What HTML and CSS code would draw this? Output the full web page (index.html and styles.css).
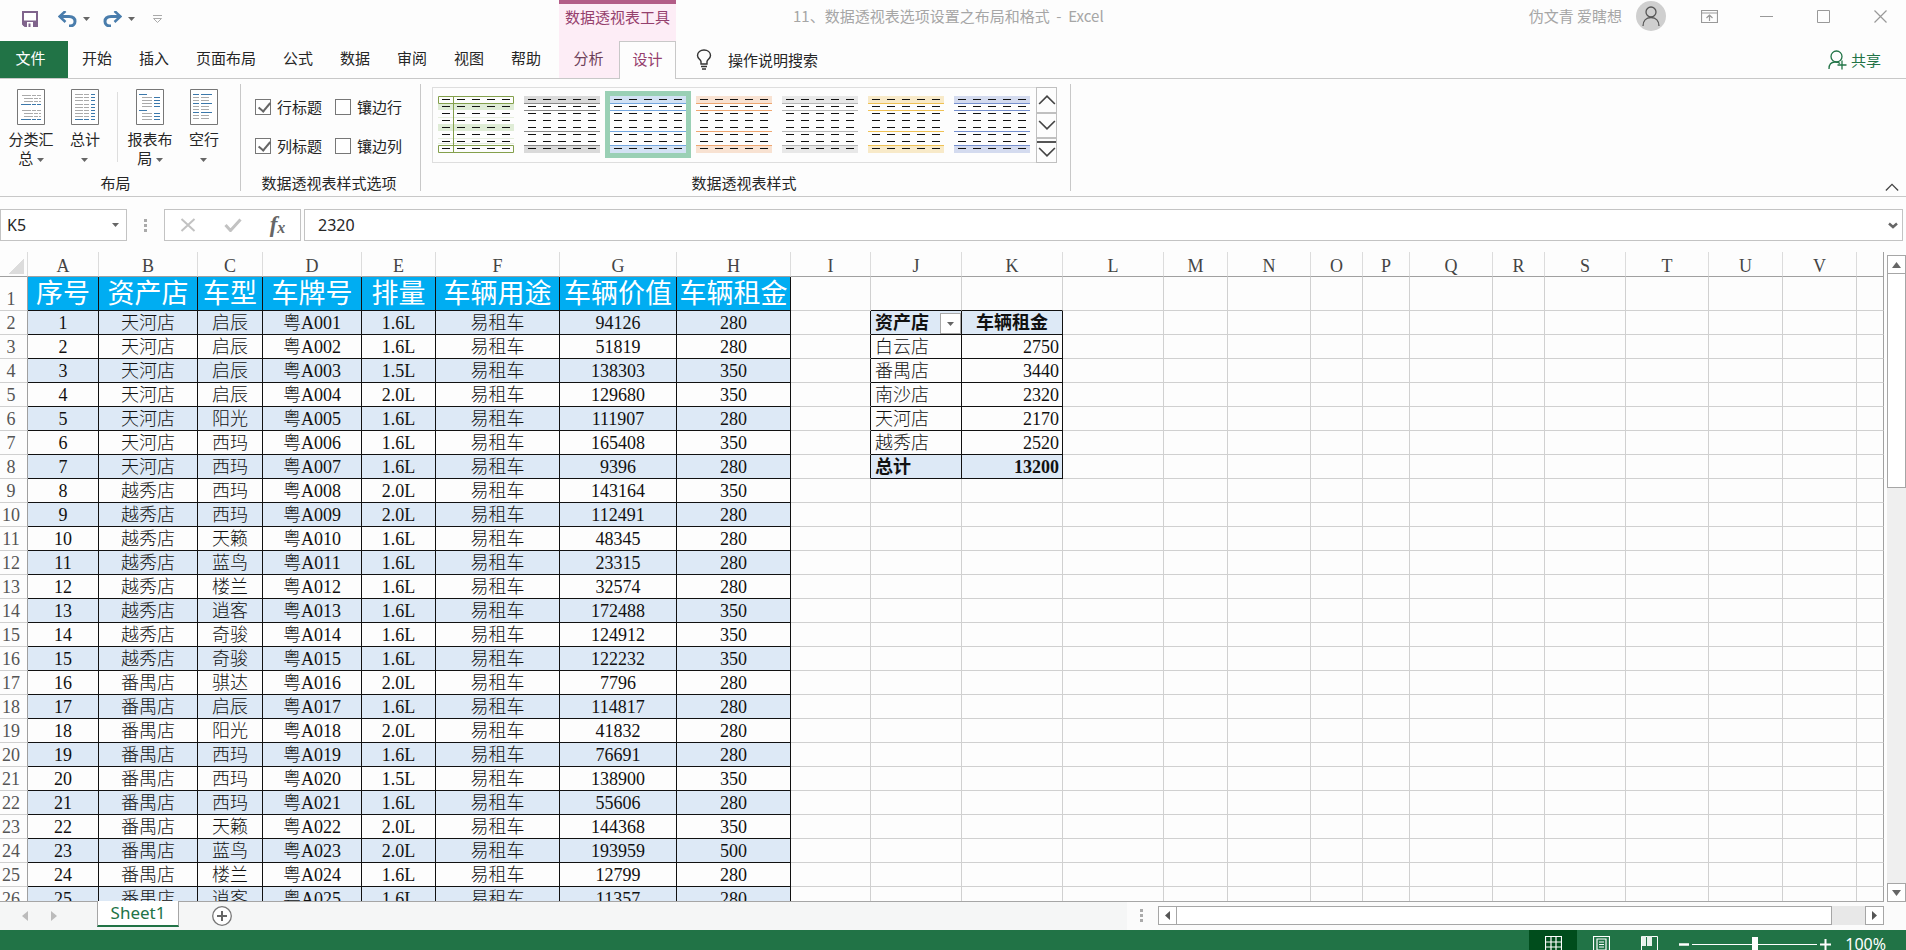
FILE: index.html
```html
<!DOCTYPE html>
<html lang="zh-CN">
<head>
    <meta charset="UTF-8">
    <meta name="viewport" content="width=device-width, initial-scale=1.0">
    <title>11、数据透视表选项设置之布局和格式 - Excel</title>
    <link rel="stylesheet" href="styles.css">
</head>
<body>
    <!-- Shared symbols -->
    <svg class="symbols" aria-hidden="true">
        <symbol id="caret" viewBox="0 0 7 4"><path d="M0 0h7L3.500 4z" fill="currentColor"/></symbol>
        <symbol id="chevron-up" viewBox="0 0 16 9"><path d="M1 8.500L8 1.500l7 7" fill="none" stroke="currentColor" stroke-width="1.500"/></symbol>
        <symbol id="chevron-down" viewBox="0 0 16 9"><path d="M1 .5l7 7 7-7" fill="none" stroke="currentColor" stroke-width="1.500"/></symbol>
        <symbol id="dashes" viewBox="0 0 76 57">
            <path d="M4 3.500h70M4 10.500h70M4 17.500h70M4 24.500h70M4 31.500h70M4 38.500h70M4 45.500h70M4 52.500h70" stroke="#111" stroke-dasharray="8 7"/>
        </symbol>
        <symbol id="style-banded" viewBox="0 0 76 57">
            <path d="M0 0h76v7H0zM0 49h76v8H0z" fill="currentColor" opacity=".3"/>
            <path d="M0 7.500h76M0 14.500h76M0 35.500h76M0 49.500h76" stroke="currentColor"/>
            <use href="#dashes" width="76" height="57"/>
        </symbol>
        <symbol id="style-outline" viewBox="0 0 76 57">
            <path d="M0 8h76v6H0zM0 28h76v7H0z" fill="#dfecd6"/>
            <path d="M0 21.500h76M0 42.500h76M0 47.500h76" stroke="#e6eede"/>
            <path d="M.5.5h75v7H.5zM.5 49.500h75v7H.5zM15.500 0v57" fill="none" stroke="#84a04c"/>
            <use href="#dashes" width="76" height="57"/>
        </symbol>
    </svg>

    <div class="app">
        <header class="top">
            <div class="top-left">
                <div class="quick-access">
                    <button class="qat save" aria-label="保存">
                        <svg width="16" height="16" viewBox="0 0 16 16"><path d="M1 1h14v14H3l-2-2z" fill="#fff" stroke="#80648c" stroke-width="2"/><path d="M1 9.500h14V15H1z" fill="#80648c"/><path d="M5 11h6v5H5z" fill="#fff"/><path d="M6.500 12.500h2V16h-2z" fill="#80648c"/></svg>
                    </button>
                    <button class="qat" aria-label="撤消">
                        <svg width="19" height="16" viewBox="0 0 19 16"><path d="M2 5.500h9c4 0 6 2 6 5 0 2.500-2 4.500-5 4.500h-1" fill="none" stroke="#4a7dac" stroke-width="3"/><path d="M7.500 0L1.500 5.500l6 5.500" fill="none" stroke="#4a7dac" stroke-width="2.500"/></svg>
                    </button>
                    <svg class="caret undo-caret" width="7" height="4"><use href="#caret"/></svg>
                    <button class="qat" aria-label="恢复">
                        <svg width="19" height="16" viewBox="0 0 19 16"><path d="M17 5.500H8c-4 0-6 2-6 5C2 13 4 15 7 15h1" fill="none" stroke="#4a7dac" stroke-width="3"/><path d="M11.500 0l6 5.500-6 5.500" fill="none" stroke="#4a7dac" stroke-width="2.500"/></svg>
                    </button>
                    <svg class="caret redo-caret" width="7" height="4"><use href="#caret"/></svg>
                    <button class="qat" aria-label="自定义快速访问工具栏">
                        <svg width="11" height="9" viewBox="0 0 11 9"><path d="M1 .5h9M1.500 3.500h8l-4 4z" fill="none" stroke="#aaa"/></svg>
                    </button>
                </div>
                <nav class="tabs">
                    <button class="tab tab-file">文件</button>
                    <button class="tab">开始</button>
                    <button class="tab">插入</button>
                    <button class="tab">页面布局</button>
                    <button class="tab">公式</button>
                    <button class="tab">数据</button>
                    <button class="tab">审阅</button>
                    <button class="tab">视图</button>
                    <button class="tab">帮助</button>
                </nav>
            </div>

            <div class="context-tools">
                <div class="context-title">数据透视表工具</div>
                <nav class="tabs">
                    <button class="tab">分析</button>
                    <button class="tab tab-active">设计</button>
                </nav>
            </div>

            <div class="top-right">
                <div class="title-row">
                    <span class="doc-title">11、数据透视表选项设置之布局和格式&nbsp; -&nbsp; Excel</span>
                    <span class="user-name">伪文青 爱瞎想</span>
                    <span class="avatar">
                        <svg width="18" height="20" viewBox="0 0 18 20"><g fill="none" stroke="#555" stroke-width="1.300"><circle cx="9" cy="6" r="5"/><path d="M1 20c0-5 3-8.500 8-8.500s8 3.500 8 8.500"/></g></svg>
                    </span>
                    <button class="win-btn" aria-label="功能区显示选项">
                        <svg width="17" height="13" viewBox="0 0 17 13"><path d="M.5.5h16v12H.5zM.5 3h16M8.500 11V5M5.500 8l3-3 3 3" fill="none" stroke="#999" stroke-width="1.200"/></svg>
                    </button>
                    <button class="win-btn" aria-label="最小化">
                        <svg width="13" height="13" viewBox="0 0 13 13"><path d="M0 6.500h13" stroke="#999"/></svg>
                    </button>
                    <button class="win-btn" aria-label="最大化">
                        <svg width="13" height="13" viewBox="0 0 13 13"><path d="M.5.5h12v12H.5z" fill="none" stroke="#999"/></svg>
                    </button>
                    <button class="win-btn" aria-label="关闭">
                        <svg width="13" height="13" viewBox="0 0 13 13"><path d="M.5.5l12 12M12.500.5l-12 12" stroke="#999" stroke-width="1.200"/></svg>
                    </button>
                </div>
                <div class="tell-row">
                    <button class="tell-me">
                        <svg width="16" height="21" viewBox="0 0 16 21"><g fill="none" stroke="#333" stroke-width="1.400"><path d="M5 15v-2.500C4.500 10.500 1.500 9.500 1.500 6.500 1.500 3 4.500 1 8 1s6.500 2 6.500 5.500c0 3-3 4-3.500 6V15z"/><path d="M5 17.500h6M6 20h4"/></g></svg>
                        <span>操作说明搜索</span>
                    </button>
                    <button class="share">
                        <svg width="19" height="20" viewBox="0 0 19 20"><g fill="none" stroke="#217346" stroke-width="1.300"><circle cx="8.500" cy="6.500" r="5.500"/><path d="M1 19c0-4 2-7 6-7 2 0 4 .5 5 1.500M14 10.500v9M9.500 15h9"/></g></svg>
                        <span>共享</span>
                    </button>
                </div>
            </div>
        </header>

        <section class="ribbon">
            <div class="group group-layout">
                <div class="group-body">
                    <button class="big-btn">
                        <svg width="28" height="36" viewBox="0 0 28 36"><path d="M.5.5h27v35H.5z" fill="#fff" stroke="#777"/><path d="M5 6.500h19M7 9.500h17M7 12.500h17M5 21.500h19M7 24.500h17M7 27.500h17" stroke="#aaa" stroke-dasharray="9 1 4 1"/><path d="M4 15.500h20M4 30.500h20" stroke="#3b78ab" stroke-dasharray="10 1 4 1"/></svg>
                        <span>分类汇<br>总 <svg class="caret" width="7" height="4"><use href="#caret"/></svg></span>
                    </button>
                    <button class="big-btn">
                        <svg width="28" height="36" viewBox="0 0 28 36"><path d="M.5.5h27v35H.5z" fill="#fff" stroke="#777"/><path d="M4 5.500h14M4 8.500h14M4 11.500h14M4 15.500h14M4 18.500h14M4 21.500h14M4 24.500h14M4 27.500h14" stroke="#aaa" stroke-dasharray="8 1 5 1"/><path d="M20 5.500h4M20 8.500h4M20 11.500h4M20 15.500h4M20 18.500h4M20 21.500h4M20 24.500h4M20 27.500h4M4 30.500h8M13 30.500h5M20 30.500h4" stroke="#3b78ab"/></svg>
                        <span>总计<br><svg class="caret" width="7" height="4"><use href="#caret"/></svg></span>
                    </button>
                    <div class="divider"></div>
                    <button class="big-btn">
                        <svg width="28" height="36" viewBox="0 0 28 36"><path d="M.5.5h27v35H.5z" fill="#fff" stroke="#777"/><path d="M6 8.500h10M6 11.500h10M6 14.500h10M6 17.500h10M6 24.500h10M6 27.500h10M6 30.500h10" stroke="#aaa"/><path d="M3 5.500h8M3 21.500h8M18 8.500h6M18 11.500h6M18 14.500h6M18 17.500h6M18 24.500h6M18 27.500h6M18 30.500h6" stroke="#3b78ab"/></svg>
                        <span>报表布<br>局 <svg class="caret" width="7" height="4"><use href="#caret"/></svg></span>
                    </button>
                    <button class="big-btn">
                        <svg width="28" height="36" viewBox="0 0 28 36"><path d="M.5.5h27v35H.5z" fill="#fff" stroke="#777"/><path d="M3 8.500h6M11 8.500h8M3 11.500h6M11 11.500h8M3 17.500h6M11 17.500h8M3 20.500h6M11 20.500h8M3 26.500h6M11 26.500h8M3 29.500h6M11 29.500h8" stroke="#aaa"/><path d="M3 5.500h6M11 5.500h11M3 14.500h6M11 14.500h11M3 23.500h6M11 23.500h11" stroke="#3b78ab"/></svg>
                        <span>空行<br><svg class="caret" width="7" height="4"><use href="#caret"/></svg></span>
                    </button>
                </div>
                <div class="group-label">布局</div>
            </div>

            <div class="group group-options">
                <div class="group-body options">
                    <label><input type="checkbox" checked>行标题</label>
                    <label><input type="checkbox">镶边行</label>
                    <label><input type="checkbox" checked>列标题</label>
                    <label><input type="checkbox">镶边列</label>
                </div>
                <div class="group-label">数据透视表样式选项</div>
            </div>

            <div class="group group-styles">
                <div class="group-body">
                    <div class="gallery">
                        <button class="style-item" aria-label="样式 1"><svg width="76" height="57"><use href="#style-outline"/></svg></button>
                        <button class="style-item gray" aria-label="样式 2"><svg width="76" height="57"><use href="#style-banded"/></svg></button>
                        <button class="style-item blue selected" aria-label="样式 3"><svg width="76" height="57"><use href="#style-banded"/></svg></button>
                        <button class="style-item orange" aria-label="样式 4"><svg width="76" height="57"><use href="#style-banded"/></svg></button>
                        <button class="style-item silver" aria-label="样式 5"><svg width="76" height="57"><use href="#style-banded"/></svg></button>
                        <button class="style-item gold" aria-label="样式 6"><svg width="76" height="57"><use href="#style-banded"/></svg></button>
                        <button class="style-item indigo" aria-label="样式 7"><svg width="76" height="57"><use href="#style-banded"/></svg></button>
                    </div>
                    <div class="gallery-nav">
                        <button aria-label="上一行"><svg width="18" height="11"><use href="#chevron-up"/></svg></button>
                        <button aria-label="下一行"><svg width="18" height="11"><use href="#chevron-down"/></svg></button>
                        <button class="more" aria-label="其他"><svg width="18" height="11"><use href="#chevron-down"/></svg></button>
                    </div>
                </div>
                <div class="group-label">数据透视表样式</div>
            </div>
            <button class="collapse" aria-label="折叠功能区"><svg width="14" height="8"><use href="#chevron-up"/></svg></button>
        </section>

        <section class="formula-bar">
            <div class="name-box">
                <input type="text" value="K5" aria-label="名称框">
                <button aria-label="名称列表"><svg class="caret" width="7" height="4"><use href="#caret"/></svg></button>
            </div>
            <span class="dots"></span>
            <div class="formula-buttons">
                <button aria-label="取消"><svg width="16" height="14" viewBox="0 0 16 14"><path d="M1.500 1l13 12M14.500 1l-13 12" stroke="#c2c2c2" stroke-width="2"/></svg></button>
                <button aria-label="输入"><svg width="18" height="14" viewBox="0 0 18 14"><path d="M1.500 7l5 5.500L16.500 1.500" fill="none" stroke="#c2c2c2" stroke-width="3"/></svg></button>
                <button class="fx" aria-label="插入函数">f<small>x</small></button>
            </div>
            <div class="formula-input">
                <input type="text" value="2320" aria-label="编辑栏">
                <button aria-label="展开编辑栏"><svg width="10" height="7" viewBox="0 0 10 7"><path d="M1 1.500l4 3.500 4-3.500" fill="none" stroke="#666" stroke-width="2.500"/></svg></button>
            </div>
        </section>

        <main class="sheet-area">
            <div class="sheet-view">
                <table class="sheet">
                    <colgroup id="cols"></colgroup>
                    <thead><tr id="letters"></tr></thead>
                    <tbody id="rows"></tbody>
                </table>
            </div>
            <div class="v-scroll">
                <button aria-label="向上滚动"><svg width="9" height="6" viewBox="0 0 9 6"><path d="M0 6h9L4.500 0z" fill="#666"/></svg></button>
                <div class="v-thumb"></div>
                <div class="v-track"></div>
                <button aria-label="向下滚动"><svg width="9" height="6" viewBox="0 0 9 6"><path d="M0 0h9L4.500 6z" fill="#666"/></svg></button>
            </div>
        </main>

        <div class="sheet-bar">
            <div class="sheet-tabs">
                <button class="sheet-nav" aria-label="上一张"><svg width="6" height="10" viewBox="0 0 6 10"><path d="M6 0v10L0 5z" fill="#bbb"/></svg></button>
                <button class="sheet-nav" aria-label="下一张"><svg width="6" height="10" viewBox="0 0 6 10"><path d="M0 0v10l6-5z" fill="#bbb"/></svg></button>
                <button class="sheet-tab">Sheet1</button>
                <button class="add-sheet" aria-label="新工作表"><svg width="20" height="20" viewBox="0 0 20 20"><circle cx="10" cy="10" r="9.300" fill="#fff" stroke="#777" stroke-width="1.300"/><path d="M10 5v10M5 10h10" stroke="#666" stroke-width="2"/></svg></button>
            </div>
            <div class="h-scroll">
                <span class="dots"></span>
                <button aria-label="向左滚动"><svg width="5" height="9" viewBox="0 0 5 9"><path d="M5 0v9L0 4.500z" fill="#555"/></svg></button>
                <div class="h-thumb"></div>
                <div class="h-track"></div>
                <button aria-label="向右滚动"><svg width="5" height="9" viewBox="0 0 5 9"><path d="M0 0v9l5-4.500z" fill="#555"/></svg></button>
            </div>
        </div>

        <footer class="status-bar">
            <button class="view-btn current" aria-label="普通"><svg width="17" height="17" viewBox="0 0 17 17"><path d="M.5.5h16v16H.5zM6 0v17M11 0v17M0 6h17M0 11h17" fill="none" stroke="#fff" stroke-width="1.200"/></svg></button>
            <button class="view-btn" aria-label="页面布局"><svg width="17" height="17" viewBox="0 0 17 17"><path d="M.5.5h16v16H.5zM4 3h9v11H4zM6 6h5M6 8.500h5M6 11h5" fill="none" stroke="#fff" stroke-width="1.200"/></svg></button>
            <button class="view-btn" aria-label="分页预览"><svg width="17" height="17" viewBox="0 0 17 17"><path d="M.5.500h16v16H.5z" fill="none" stroke="#fff"/><path d="M1 0h4v10H1zM6 0h5v10H6z" fill="#e8f1ec"/></svg></button>
            <button class="zoom-btn" aria-label="缩小"><svg width="11" height="11" viewBox="0 0 11 11"><path d="M1 5.500h10" stroke="#fff" stroke-width="2.500"/></svg></button>
            <input class="zoom-slider" type="range" min="0" max="100" value="50" aria-label="显示比例">
            <button class="zoom-btn" aria-label="放大"><svg width="11" height="11" viewBox="0 0 11 11"><path d="M0 5.500h11M5.500 0v11" stroke="#fff" stroke-width="2"/></svg></button>
            <span class="zoom-value">100%</span>
        </footer>
    </div>

    <script src="script.js"></script>
</body>
</html>
```
FILE: styles.css
```css
* {
    box-sizing: border-box;
}
body {
    margin: 0;
    height: 100vh;
    overflow: hidden;
    background: #fdfdfd;
    color: #262626;
    font-family: "Noto Sans CJK SC", sans-serif;
    font-size: 15px;
    line-height: 20px;
}
button {
    display: flex;
    align-items: center;
    justify-content: center;
    padding: 0;
    border: 0;
    background: none;
    color: inherit;
    font: inherit;
    white-space: nowrap;
}
input {
    font: inherit;
    color: inherit;
}
svg {
    display: block;
    flex: none;
}
.symbols {
    position: absolute;
    width: 0;
    height: 0;
}
.caret {
    color: #666;
}
/* the status bar runs a little below the window edge */
.app {
    display: flex;
    flex-direction: column;
    height: calc(100vh + 8px);
}

/* Title bar and tabs */
.top {
    display: flex;
    height: 79px;
    flex: none;
}
.top-left {
    width: 559px;
    flex: none;
}
.quick-access {
    display: flex;
    align-items: center;
    height: 41px;
    padding: 0 0 3px 22px;
}
.qat.save {
    margin-right: 20px;
}
.undo-caret {
    margin: 0 13px 0 6px;
}
.redo-caret {
    margin: 0 17px 0 6px;
}
.tabs {
    display: flex;
    gap: 1px;
    height: 38px;
    border-bottom: 1px solid #c8c8c8;
}
.tab {
    padding: 0 13px 4px;
}
.tab-file {
    width: 68px;
    padding-right: 20px;
    background: #217346;
    color: #fff;
}
.context-tools {
    width: 117px;
    flex: none;
    border-top: 4px solid #b35c87;
    background: #fdedf6;
    color: #95406d;
}
.context-title {
    height: 37px;
    line-height: 26px;
    text-align: center;
}
.context-tools .tab {
    flex: 1;
    padding: 0 0 4px;
    color: #6d4159;
}
.context-tools .tab-active {
    height: 38px;
    flex: 0 0 57px;
    border: 1px solid #c8c8c8;
    border-bottom: 0;
    background: #fdfdfd;
    color: #95406d;
}
.top-right {
    flex: 1;
}
.title-row {
    display: flex;
    align-items: center;
    height: 41px;
    padding: 0 19px 9px 117px;
    color: #a6a6a6;
}
.doc-title {
    flex: 1;
}
.avatar {
    display: flex;
    align-items: center;
    justify-content: center;
    width: 30px;
    height: 30px;
    margin: 0 15px 0 14px;
    border-radius: 50%;
    background: #cfcfcf;
}
.win-btn {
    width: 57px;
    height: 30px;
}
.win-btn:last-child {
    width: 13px;
    margin-left: 22px;
}
.tell-row {
    display: flex;
    justify-content: space-between;
    height: 38px;
    padding: 0 25px 0 20px;
    border-bottom: 1px solid #c8c8c8;
}
.tell-me {
    gap: 16px;
}
.share {
    gap: 4px;
    color: #217346;
}

/* Ribbon */
.ribbon {
    display: flex;
    flex: none;
    height: 118px;
    padding: 5px 0;
    border-bottom: 1px solid #c8c8c8;
}
.group {
    display: flex;
    flex-direction: column;
    justify-content: space-between;
    border-right: 1px solid #c8c8c8;
}
.group-body {
    display: flex;
    height: 88px;
}
.group-label {
    height: 19px;
    line-height: 22px;
    text-align: center;
}
.group-layout {
    width: 241px;
}
.group-layout .group-label {
    padding-right: 9px;
}
.group-layout .group-body {
    padding: 5px 5px 0 4px;
}
.big-btn {
    flex-direction: column;
    justify-content: flex-start;
    gap: 4px;
    width: 54px;
    line-height: 19px;
}
.big-btn .caret {
    display: inline-block;
    vertical-align: middle;
}
.divider {
    width: 1px;
    height: 70px;
    margin: 3px 5px 0;
    background: #dedede;
}
.group-options {
    width: 180px;
}
.group-options .group-label {
    padding-right: 3px;
}
.options {
    display: grid;
    grid-template-columns: 80px 80px;
    grid-template-rows: 39px 39px;
    align-items: center;
    padding: 3px 0 0 14px;
}
.options label {
    display: flex;
    align-items: center;
    gap: 6px;
    line-height: 18px;
}
.options input {
    appearance: none;
    width: 16px;
    height: 16px;
    margin: 0;
    border: 1px solid #777;
    background: #fff;
}
.options input:checked::after {
    content: "";
    display: block;
    width: 5px;
    height: 10px;
    margin: 0 0 0 5px;
    border: solid #666;
    border-width: 0 2px 2px 0;
    transform: rotate(40deg);
}
.group-styles {
    width: 650px;
}
.group-styles .group-label {
    padding-right: 3px;
}
.group-styles .group-body {
    height: 79px;
    padding: 3px 13px 0 11px;
}
.gallery {
    display: flex;
    flex: 1;
    padding-top: 3px;
    border: 1px solid #dedede;
    border-right: 0;
}
.style-item {
    width: 86px;
    height: 67px;
    flex: none;
}
.style-item.selected {
    border: 5px solid #9ad0b5;
}
.gray { color: #8a8a8a; }
.blue { color: #74a7e0; }
.orange { color: #eea671; }
.silver { color: #b8b8b8; }
.gold { color: #efc153; }
.indigo { color: #7690cf; }
.gallery-nav {
    display: flex;
    flex-direction: column;
    width: 21px;
    border: 1px solid #c0c0c0;
    color: #444;
}
.gallery-nav button {
    flex: 1;
    border-bottom: 2px solid #c0c0c0;
}
.gallery-nav .more {
    flex: 0 0 21px;
    margin-top: 2px;
    border-top: 2px solid #555;
    border-bottom: 0;
}
.collapse {
    align-self: flex-end;
    margin: 0 7px 0 auto;
    color: #444;
}

/* Formula bar */
.formula-bar {
    display: flex;
    flex: none;
    height: 55px;
    padding: 12px 3px 11px 0;
}
.formula-bar input {
    flex: 1;
    min-width: 0;
    padding: 0;
    border: 0;
    background: none;
    outline: 0;
    font-family: "Noto Sans", sans-serif;
    font-size: 16px;
}
.name-box,
.formula-buttons,
.formula-input {
    display: flex;
    border: 1px solid #c3c3c3;
    background: #fff;
}
.name-box {
    width: 127px;
    padding: 0 7px 0 6px;
}
.dots {
    width: 3px;
    height: 13px;
    flex: none;
    background: repeating-linear-gradient(#aaa 0 3px, transparent 3px 5px);
}
.formula-bar .dots {
    margin: 10px 17px;
}
.formula-buttons {
    width: 137px;
    margin-right: 3px;
}
.formula-buttons button {
    flex: 1;
}
.formula-buttons .fx {
    color: #666;
    font-family: "Liberation Serif", serif;
    font-size: 23px;
    font-style: italic;
    font-weight: bold;
}
.fx small {
    font-size: 16px;
    padding-top: 5px;
}
.formula-input {
    flex: 1;
    padding: 0 4px 0 13px;
}

/* Worksheet */
.sheet-area {
    display: flex;
    flex: 1;
    min-height: 0;
}
.sheet-view {
    flex: 1;
    min-width: 0;
    overflow: hidden;
    border-bottom: 1px solid #a6a6a6;
}
.sheet {
    width: 100%;
    table-layout: fixed;
    border-spacing: 0;
    color: #111;
    font-family: "Liberation Serif", "Noto Sans CJK SC", serif;
    font-size: 18px;
    font-weight: 300;
    line-height: 21px;
}
.sheet th,
.sheet td {
    height: 24px;
    padding: 2px 0 0;
    border-right: 1px solid #d0d0d0;
    border-bottom: 1px solid #d0d0d0;
    text-align: center;
    white-space: nowrap;
    overflow: hidden;
}
.sheet thead th {
    height: 25px;
    padding-top: 4px;
    border-right-color: #dcdcdc;
    border-bottom-color: #a0a0a0;
    color: #444;
    font-weight: 400;
    line-height: 20px;
}
.sheet tbody th {
    padding-right: 5px;
    border-right-color: #a0a0a0;
    color: #555;
    font-weight: 400;
}
.sheet .first th,
.sheet .first td {
    height: 34px;
}
.sheet .first th {
    padding-top: 12px;
}
.sheet th:last-child,
.sheet td:last-child {
    border-right-color: #a0a0a0;
}
.corner::after {
    content: "";
    display: block;
    width: 16px;
    height: 16px;
    margin-left: 8px;
    background: linear-gradient(135deg, transparent 50%, #dcdcdc 50%);
}
.sheet td.data {
    border-color: #111;
}
.sheet td.head {
    border-color: #111;
    background: #00adf2;
    color: #fff;
    font-size: 27px;
    font-weight: 400;
    line-height: 31px;
}
.sheet td.band {
    background: #dde9f6;
}
.sheet td.edge-right {
    border-right-color: #111;
}
.sheet td.edge-bottom {
    border-bottom-color: #111;
}
.sheet td.strong {
    font-weight: bold;
}
.sheet td.left {
    padding-left: 4px;
    text-align: left;
}
.sheet td.right {
    padding-right: 3px;
    text-align: right;
}
.sheet .filter {
    float: right;
    width: 21px;
    height: 21px;
    border: 1px solid #a8a8a8;
    background: #fff;
}

/* Scroll bars */
.v-scroll {
    display: flex;
    flex-direction: column;
    width: 22px;
    padding: 3px 0 0 3px;
}
.v-scroll button,
.h-scroll button,
.v-thumb,
.h-thumb {
    border: 1px solid #a6a6a6;
    background: #fff;
}
.v-scroll button {
    height: 19px;
    flex: none;
}
.v-thumb {
    flex: 35;
    margin-top: -1px;
}
.v-track {
    flex: 65;
    background: #efefef;
}
.sheet-bar {
    display: flex;
    height: 28px;
    flex: none;
    background: #f5f6f6;
}
.sheet-tabs {
    display: flex;
    align-items: flex-start;
    width: 1127px;
    padding-left: 22px;
}
.sheet-nav {
    height: 28px;
    margin-right: 23px;
}
.sheet-tab {
    width: 82px;
    height: 26px;
    margin: -1px 33px 0 17px;
    border: solid #a6a6a6;
    border-width: 0 1px;
    border-bottom: 2px solid #217346;
    background: #fff;
    color: #217346;
    font-family: "Noto Sans", sans-serif;
    font-size: 17px;
}
.add-sheet {
    margin-top: 4px;
}
.h-scroll {
    display: flex;
    flex: 1;
    padding: 4px 22px 5px 13px;
    background: #fbfbfb;
}
.h-scroll .dots {
    margin: 3px 15px 0 0;
}
.h-scroll button {
    width: 19px;
}
.h-thumb {
    flex: 1;
    margin-left: -1px;
}
.h-track {
    width: 33px;
    background: #e8e8e8;
}

/* Status bar */
.status-bar {
    display: flex;
    justify-content: flex-end;
    height: 28px;
    flex: none;
    padding-right: 20px;
    background: #217346;
    color: #fff;
}
.view-btn {
    width: 48px;
}
.view-btn.current {
    background: #004d1c;
}
.zoom-btn {
    width: 11px;
}
.view-btn + .zoom-btn {
    margin-left: 5px;
}
.zoom-slider {
    appearance: none;
    width: 125px;
    height: 28px;
    margin: 0 3px;
    background: linear-gradient(#fff, #fff) center / 100% 1px no-repeat;
}
.zoom-slider::-webkit-slider-thumb {
    appearance: none;
    width: 6px;
    height: 15px;
    background: #fff;
}
.zoom-value {
    width: 55px;
    line-height: 28px;
    text-align: right;
    font-family: "Noto Sans", sans-serif;
    font-size: 16px;
}
```
FILE: script.js
```javascript
// Column widths, the last column takes what is left
const widths = [28, 71, 99, 65, 99, 74, 124, 117, 114, 80, 91, 101, 101, 64, 83, 52, 47, 83, 52, 81, 83, 74, 74];
const letters = 'ABCDEFGHIJKLMNOPQRSTUV'.split('');

const headings = ['序号', '资产店', '车型', '车牌号', '排量', '车辆用途', '车辆价值', '车辆租金'];

// store, model, engine, value, rent
const cars = [
    ['天河店', '启辰', '1.6L', 94126, 280],
    ['天河店', '启辰', '1.6L', 51819, 280],
    ['天河店', '启辰', '1.5L', 138303, 350],
    ['天河店', '启辰', '2.0L', 129680, 350],
    ['天河店', '阳光', '1.6L', 111907, 280],
    ['天河店', '西玛', '1.6L', 165408, 350],
    ['天河店', '西玛', '1.6L', 9396, 280],
    ['越秀店', '西玛', '2.0L', 143164, 350],
    ['越秀店', '西玛', '2.0L', 112491, 280],
    ['越秀店', '天籁', '1.6L', 48345, 280],
    ['越秀店', '蓝鸟', '1.6L', 23315, 280],
    ['越秀店', '楼兰', '1.6L', 32574, 280],
    ['越秀店', '逍客', '1.6L', 172488, 350],
    ['越秀店', '奇骏', '1.6L', 124912, 350],
    ['越秀店', '奇骏', '1.6L', 122232, 350],
    ['番禺店', '骐达', '2.0L', 7796, 280],
    ['番禺店', '启辰', '1.6L', 114817, 280],
    ['番禺店', '阳光', '2.0L', 41832, 280],
    ['番禺店', '西玛', '1.6L', 76691, 280],
    ['番禺店', '西玛', '1.5L', 138900, 350],
    ['番禺店', '西玛', '1.6L', 55606, 280],
    ['番禺店', '天籁', '2.0L', 144368, 350],
    ['番禺店', '蓝鸟', '2.0L', 193959, 500],
    ['番禺店', '楼兰', '1.6L', 12799, 280],
    ['番禺店', '逍客', '1.6L', 11357, 280]
];

// Pivot table, starts in J2
const pivot = [
    ['资产店', '车辆租金'],
    ['白云店', 2750],
    ['番禺店', 3440],
    ['南沙店', 2320],
    ['天河店', 2170],
    ['越秀店', 2520],
    ['总计', 13200]
];

const filterButton = '<button class="filter" aria-label="筛选"><svg class="caret" width="7" height="4"><use href="#caret"/></svg></button>';

function cell(text, className) {
    return `<td class="${className || ''}">${text}</td>`;
}

function pivotCells(index) {
    const [name, total] = pivot[index];
    const isHead = index === 0;
    const strong = isHead || index === pivot.length - 1 ? ' band strong' : '';
    return cell((isHead ? filterButton : '') + name, 'data left' + strong) +
        cell(total, 'data' + (isHead ? '' : ' right') + strong);
}

document.getElementById('cols').innerHTML =
    widths.map(w => `<col style="width: ${w}px">`).join('') + '<col>';
document.getElementById('letters').innerHTML =
    '<th class="corner"></th>' + letters.map(l => `<th>${l}</th>`).join('') + '<th></th>';

// Row 1 holds the headings
let html = '<tr class="first"><th>1</th>' + headings.map(h => cell(h, 'head')).join('') +
    cell('') + cell('', 'edge-bottom') + cell('', 'edge-bottom') + cell('').repeat(12) + '</tr>';

cars.forEach(([store, model, engine, value, rent], i) => {
    const plate = '粤A' + String(i + 1).padStart(3, '0');
    const style = i % 2 === 0 ? 'data band' : 'data';
    const inPivot = i < pivot.length;

    html += `<tr><th>${i + 2}</th>`;
    html += [i + 1, store, model, plate, engine, '易租车', value, rent].map(v => cell(v, style)).join('');
    html += cell('', inPivot ? 'edge-right' : '');
    html += inPivot ? pivotCells(i) : cell('').repeat(2);
    html += cell('').repeat(12) + '</tr>';
});

document.getElementById('rows').innerHTML = html;
```
